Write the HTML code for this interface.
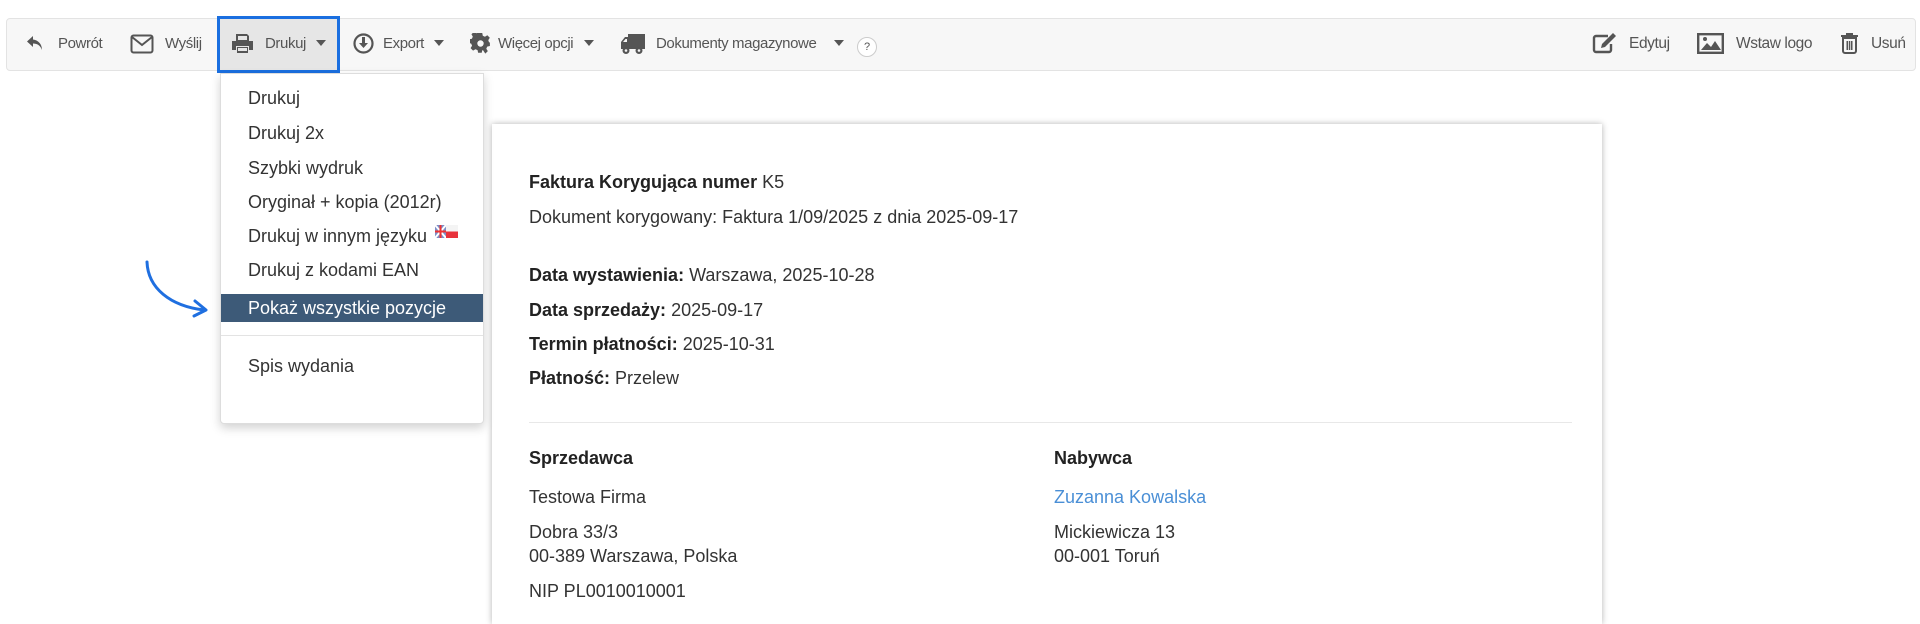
<!DOCTYPE html>
<html><head><meta charset="utf-8"><style>
*{box-sizing:border-box;margin:0;padding:0}
body{width:1920px;height:604px;overflow:hidden;background:#fff;font-family:"Liberation Sans",Arial,sans-serif;position:relative;color:#333}
.tb{position:absolute;left:6px;top:18px;width:1910px;height:53px;background:#f7f7f7;border:1px solid #e3e3e3;border-radius:4px}
.t{position:absolute;top:35px;font-size:15px;color:#555;letter-spacing:-0.4px;white-space:nowrap;line-height:18px}
.ic{position:absolute;fill:#555}
.hl{position:absolute;left:217px;top:16px;width:123px;height:57px;background:#e6e6e6;border:3px solid #1a6fe0}
.menu{position:absolute;left:220px;top:73px;width:264px;height:351px;background:#fff;border:1px solid #ddd;border-radius:0 0 4px 4px;box-shadow:0 4px 10px rgba(0,0,0,.18)}
.mi{position:absolute;left:27px;font-size:18px;line-height:22px;color:#333;white-space:nowrap}
.sel{position:absolute;left:0;top:220px;width:262px;height:28px;background:#3d5a78}
.doc{position:absolute;left:492px;top:124px;width:1110px;height:500px;background:#fff;box-shadow:0 0 6px rgba(0,0,0,.3)}
.d{position:absolute;font-size:18px;color:#333;white-space:nowrap}
b{color:#222}
</style></head><body>
<div class="tb"></div>
<div class="hl"></div>
<svg class="ic" style="left:26px;top:34px" width="18" height="18" viewBox="0 0 18 18"><path d="M7 2 L1 7.5 L7 13 V9.5 C11 9.5 14 11 16 16 C16 10 12 6 7 5.5Z"/></svg>
<div class="t" style="left:58px">Powrót</div>
<svg class="ic" style="left:130px;top:34px" width="24" height="20" viewBox="0 0 24 20"><rect x="1.5" y="1.5" width="21" height="17" rx="2" fill="none" stroke="#555" stroke-width="2"/><path d="M2 3 L12 11 L22 3" fill="none" stroke="#555" stroke-width="2"/></svg>
<div class="t" style="left:165px">Wyślij</div>
<svg class="ic" style="left:231px;top:33px" width="23" height="21" viewBox="0 0 23 21"><path d="M5 1h11l2 2v5H5z M1 8h21v9h-4v-4H5v4H1z M6 14h11v6H6z"/><rect x="7" y="3" width="9" height="4" fill="#e6e6e6"/><rect x="7" y="15" width="9" height="3" fill="#e6e6e6"/></svg>
<div class="t" style="left:265px">Drukuj</div>
<svg class="ic" style="left:316px;top:40px" width="10" height="6"><path d="M0 0h10L5 6z"/></svg>
<svg class="ic" style="left:353px;top:33px" width="21" height="21" viewBox="0 0 21 21"><circle cx="10.5" cy="10.5" r="9" fill="none" stroke="#555" stroke-width="2.2"/><path d="M9 4h3v6h3l-4.5 5L6 10h3z"/></svg>
<div class="t" style="left:383px">Export</div>
<svg class="ic" style="left:434px;top:40px" width="10" height="6"><path d="M0 0h10L5 6z"/></svg>
<svg class="ic" style="left:470px;top:33px" width="21" height="21" viewBox="0 0 21 21"><path d="M8.5 0h4l.6 3 2.4 1.2 2.6-1.7 2.8 2.8-1.7 2.6L20 10.3v0l0 0 1 .2v4l-3 .6-1 2.4 1.7 2.6-2.8 2.8L13.3 19l-.8.3-.6 2.7h-4l-.6-3-2.4-1L2.3 19.6-.5 16.8 1.2 14.2.2 11.8-2 11V7l3-.6 1-2.4L.5 1.4 3.3-1.4 5.9.3 8.1-.6z" transform="translate(1 0) scale(.9)"/><circle cx="10.5" cy="10.5" r="3.2" fill="#f7f7f7"/></svg>
<div class="t" style="left:498px">Więcej opcji</div>
<svg class="ic" style="left:584px;top:40px" width="10" height="6"><path d="M0 0h10L5 6z"/></svg>
<svg class="ic" style="left:620px;top:33px" width="25" height="22" viewBox="0 0 25 22"><path d="M8 1h17v15H8z M1 9l4-5h3v12H1z"/><circle cx="6" cy="17.5" r="3.5"/><circle cx="19" cy="17.5" r="3.5"/><circle cx="6" cy="17.5" r="1.3" fill="#f7f7f7"/><circle cx="19" cy="17.5" r="1.3" fill="#f7f7f7"/><path d="M3 9l2.5-3h1.5v3z" fill="#f7f7f7"/></svg>
<div class="t" style="left:656px">Dokumenty magazynowe</div>
<svg class="ic" style="left:834px;top:40px" width="10" height="6"><path d="M0 0h10L5 6z"/></svg>
<div style="position:absolute;left:857px;top:37px;width:20px;height:20px;border:1px solid #ccc;border-radius:50%;background:#fff;font-size:11px;color:#555;text-align:center;line-height:18px">?</div>
<svg class="ic" style="left:1592px;top:32px" width="26" height="22" viewBox="0 0 26 22"><path d="M16 4H4a2 2 0 0 0-2 2v12a2 2 0 0 0 2 2h13a2 2 0 0 0 2-2v-6" fill="none" stroke="#555" stroke-width="2.4"/><path d="M21 1l3 3-11 11-4 1 1-4z"/></svg>
<div class="t" style="left:1629px;font-size:15.5px">Edytuj</div>
<svg class="ic" style="left:1697px;top:33px" width="27" height="21" viewBox="0 0 27 21"><rect x="1.2" y="1.2" width="24.6" height="18.6" fill="none" stroke="#555" stroke-width="2.4"/><path d="M4 17l6-7 4 4 4-6 6 9z"/><circle cx="8" cy="6" r="2"/></svg>
<div class="t" style="left:1736px;font-size:15.5px">Wstaw logo</div>
<svg class="ic" style="left:1840px;top:32px" width="19" height="22" viewBox="0 0 19 22"><path d="M6 1h7v2h5v2H1V3h5z"/><path d="M3 6h13v13a2 2 0 0 1-2 2H5a2 2 0 0 1-2-2z" fill="none" stroke="#555" stroke-width="2"/><path d="M6.5 9h1.5v9H6.5zM8.8 9h1.5v9H8.8zM11 9h1.5v9H11z"/></svg>
<div class="t" style="left:1871px;font-size:15.5px">Usuń</div>

<div class="doc">
<div class="d" style="left:37px;top:48px"><b>Faktura Korygująca numer</b> K5</div>
<div class="d" style="left:37px;top:83px">Dokument korygowany: Faktura 1/09/2025 z dnia 2025-09-17</div>
<div class="d" style="left:37px;top:141px"><b>Data wystawienia:</b> Warszawa, 2025-10-28</div>
<div class="d" style="left:37px;top:176px"><b>Data sprzedaży:</b> 2025-09-17</div>
<div class="d" style="left:37px;top:210px"><b>Termin płatności:</b> 2025-10-31</div>
<div class="d" style="left:37px;top:244px"><b>Płatność:</b> Przelew</div>
<div style="position:absolute;left:37px;top:298px;width:1043px;height:1px;background:#e8e8e8"></div>
<div class="d" style="left:37px;top:324px"><b>Sprzedawca</b></div>
<div class="d" style="left:37px;top:363px">Testowa Firma</div>
<div class="d" style="left:37px;top:398px">Dobra 33/3</div>
<div class="d" style="left:37px;top:422px">00-389 Warszawa, Polska</div>
<div class="d" style="left:37px;top:457px">NIP PL0010010001</div>
<div class="d" style="left:562px;top:324px"><b>Nabywca</b></div>
<div class="d" style="left:562px;top:363px;color:#4a8fd6">Zuzanna Kowalska</div>
<div class="d" style="left:562px;top:398px">Mickiewicza 13</div>
<div class="d" style="left:562px;top:422px">00-001 Toruń</div>
</div>

<div class="menu">
<div class="mi" style="top:13px">Drukuj</div>
<div class="mi" style="top:48px">Drukuj 2x</div>
<div class="mi" style="top:83px">Szybki wydruk</div>
<div class="mi" style="top:117px">Oryginał + kopia (2012r)</div>
<div class="mi" style="top:151px">Drukuj w innym języku</div>
<svg style="position:absolute;left:214px;top:151px" width="23" height="15" viewBox="0 0 23 15"><rect x="0" y="0" width="11" height="13" fill="#7d8fc8"/><path d="M0 0L11 13M11 0L0 13" stroke="#fff" stroke-width="2"/><path d="M5.5 0v13M0 6.5h11" stroke="#e33" stroke-width="2"/><rect x="11" y="0" width="12" height="6.5" fill="#f4f4f4"/><rect x="11" y="6.5" width="12" height="6.5" fill="#e8323c"/></svg>
<div class="mi" style="top:185px">Drukuj z kodami EAN</div>
<div class="sel"></div>
<div class="mi" style="top:223px;color:#fff">Pokaż wszystkie pozycje</div>
<div style="position:absolute;left:0;top:261px;width:262px;height:1px;background:#e3e3e3"></div>
<div class="mi" style="top:281px">Spis wydania</div>
</div>

<svg style="position:absolute;left:140px;top:258px" width="75" height="60" viewBox="0 0 75 60"><path d="M7 4 C8 30 30 48 64 52" fill="none" stroke="#1f6fe0" stroke-width="3" stroke-linecap="round"/><path d="M55 43 L66 52 L54 58" fill="none" stroke="#1f6fe0" stroke-width="3" stroke-linecap="round" stroke-linejoin="round"/></svg>
</body></html>
